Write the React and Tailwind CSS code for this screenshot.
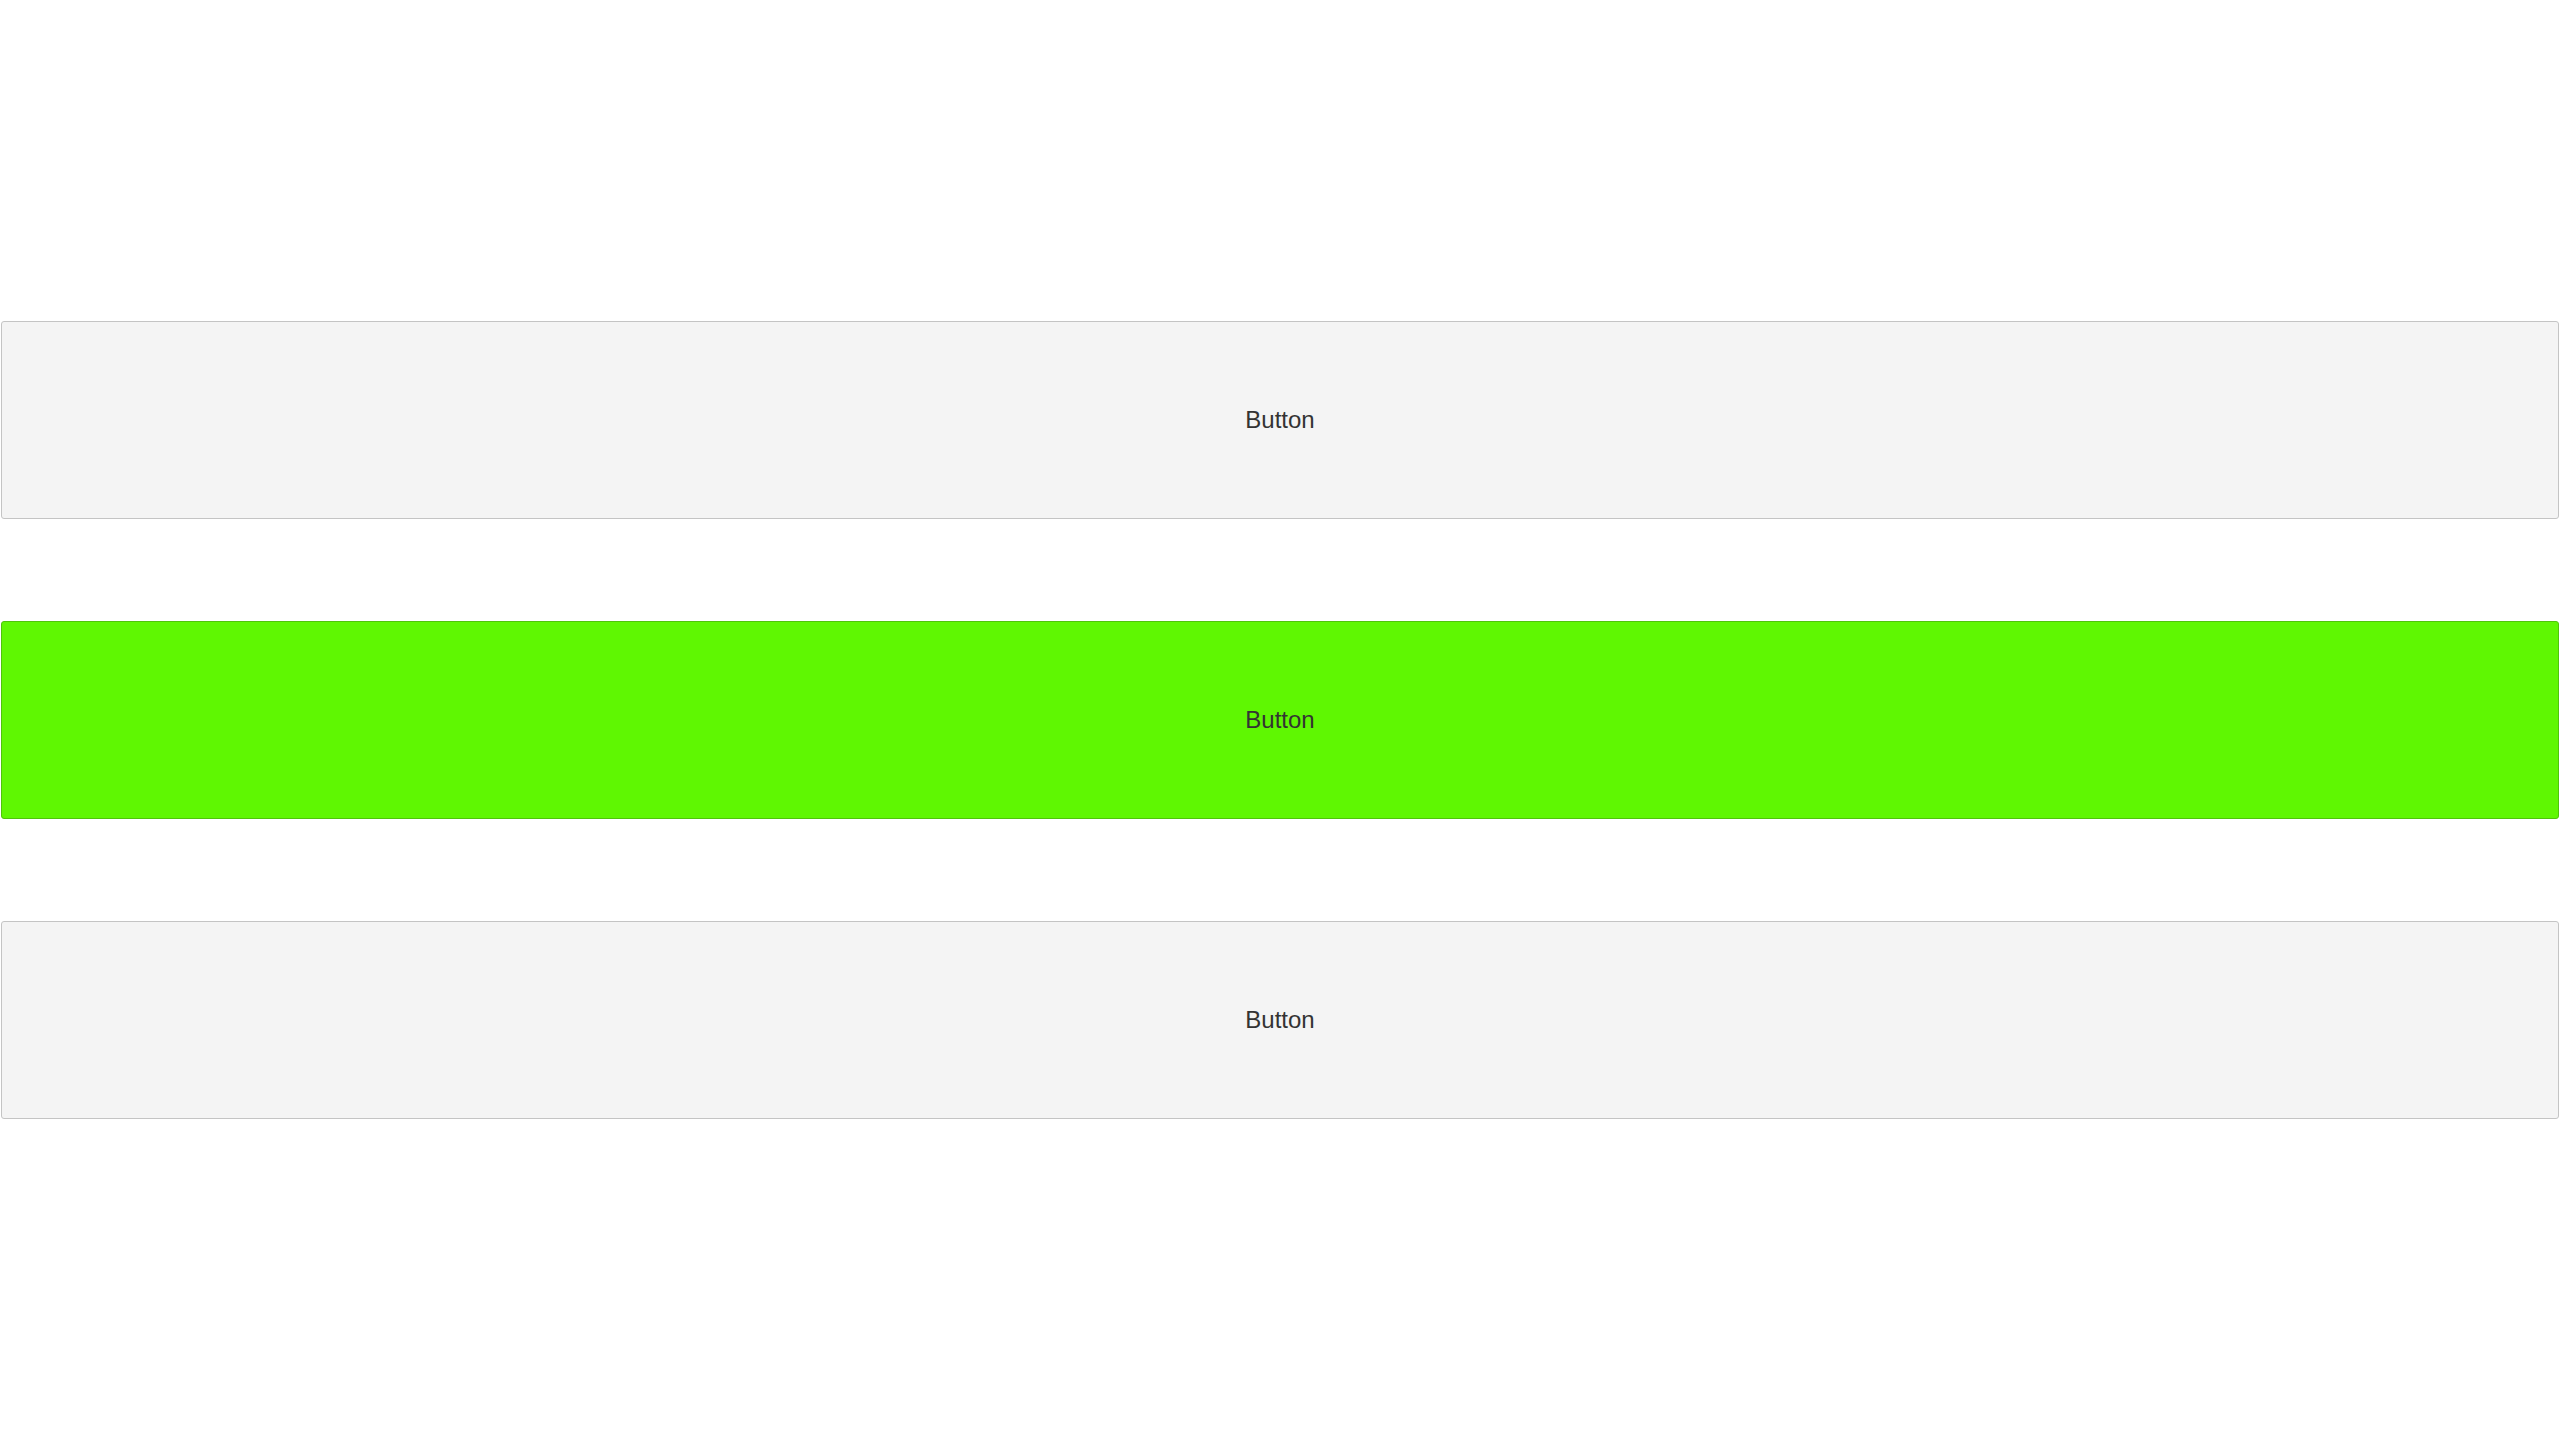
export default function App() {
  const buttons = [
    { id: 1, active: false },
    { id: 2, active: true },
    { id: 3, active: false },
  ]

  return (
    <div className="min-h-[1440px] bg-white pt-[321px] px-px font-['Liberation_Sans',Arial,sans-serif]">
      <div className="flex flex-col gap-[102px]">
        {buttons.map((b) => (
          <button
            key={b.id}
            className={`flex h-[198px] w-full items-center justify-center rounded-[3px] border text-[24px] text-[#333333] ${
              b.active ? 'border-[#4fc40a] bg-[#5ff702]' : 'border-[#c4c4c4] bg-[#f4f4f4]'
            }`}
          >
            Button
          </button>
        ))}
      </div>
    </div>
  )
}
